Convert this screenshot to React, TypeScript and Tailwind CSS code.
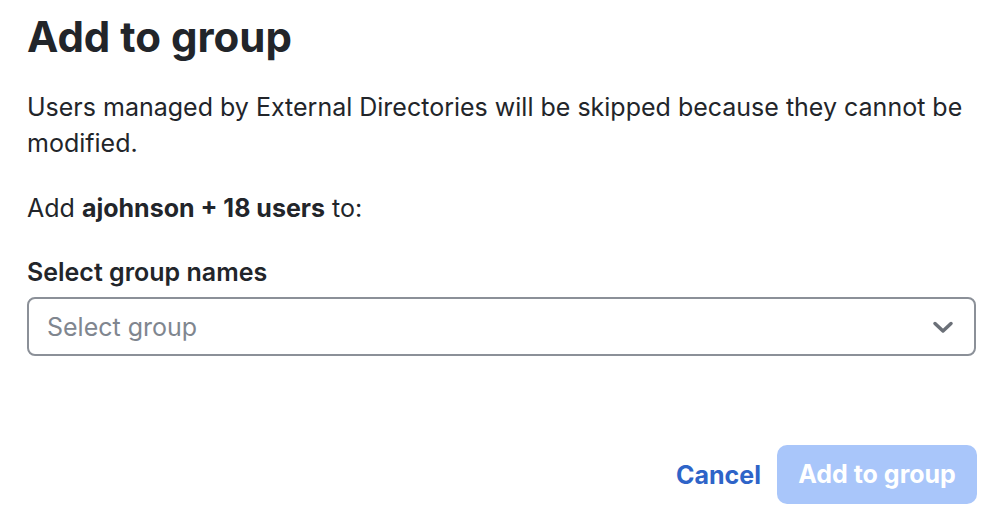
export default function App() {
  return (
    <div className="w-[998px] h-[526px] bg-white pl-[27px] pr-[22px] pt-[12px] font-['Inter',sans-serif] text-[#22252a] overflow-hidden">
      <h1 className="text-[42px] leading-[50px] font-bold">Add to group</h1>
      <p className="mt-[27px] text-[25px] leading-[36px]">
        Users managed by External Directories will be skipped because they cannot be modified.
      </p>
      <p className="mt-[29px] text-[25px] leading-[36px]">
        Add <span className="font-bold">ajohnson + 18 users</span> to:
      </p>
      <label className="block mt-[30px] text-[25px] leading-[32px] font-semibold">Select group names</label>
      <button
        type="button"
        className="mt-[9px] flex items-center justify-between w-full h-[59px] rounded-[8px] border-2 border-[#8b9098] pl-[18px] pr-[20px] text-left"
      >
        <span className="text-[25px] text-[#80868f] pt-[3px]">Select group</span>
        <svg width="22" height="14" viewBox="0 0 22 14" fill="none">
          <path d="M3 3.5l8 7.5 8-7.5" stroke="#6b7078" strokeWidth="3.5" strokeLinecap="round" strokeLinejoin="round" />
        </svg>
      </button>
      <div className="mt-[89px] flex justify-end items-center gap-[16px] -mr-px">
        <button type="button" className="text-[25px] font-bold text-[#2e64c8] pt-[3px]">Cancel</button>
        <button type="button" className="w-[200px] h-[59px] rounded-[10px] bg-[#a9c6fa] text-white text-[25px] font-bold">
          Add to group
        </button>
      </div>
    </div>
  );
}
